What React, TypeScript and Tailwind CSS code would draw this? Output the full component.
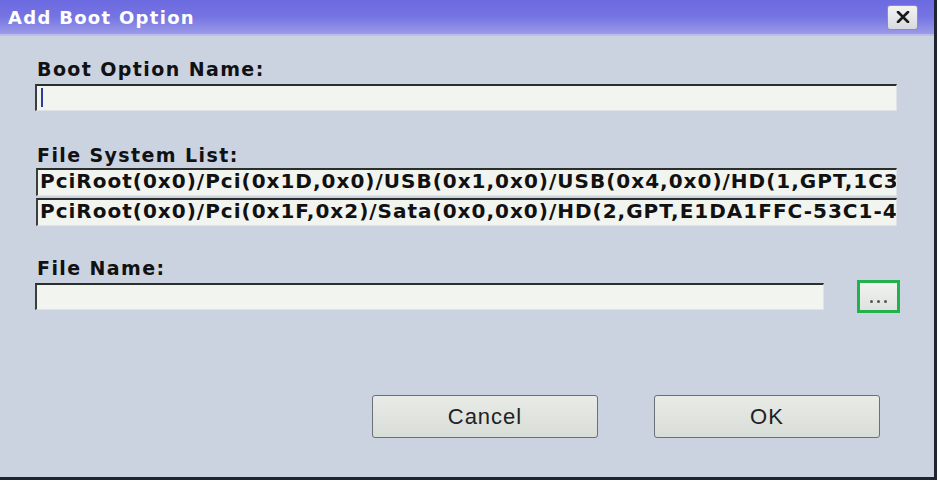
import React from "react";

const font = { fontFamily: '"DejaVu Sans", "Liberation Sans", sans-serif' };

function SunkenBox({ className = "", children }: { className?: string; children?: React.ReactNode }) {
  return (
    <div
      className={`border-t-2 border-l-2 border-t-[#2a2f2c] border-l-[#3a3f3c] border-b border-r border-b-[#dfe3e6] border-r-[#dfe3e6] bg-[#f1f4ef] ${className}`}
    >
      {children}
    </div>
  );
}

export default function App() {
  const rows = [
    "PciRoot(0x0)/Pci(0x1D,0x0)/USB(0x1,0x0)/USB(0x4,0x0)/HD(1,GPT,1C3",
    "PciRoot(0x0)/Pci(0x1F,0x2)/Sata(0x0,0x0)/HD(2,GPT,E1DA1FFC-53C1-4",
  ];
  return (
    <div className="w-[940px] h-[484px] bg-white overflow-hidden relative" style={font}>
      <div className="w-[937px] h-[480px] border-r-[3px] border-b-[3px] border-[#1e2430] bg-[#cbd3e0] flex flex-col">
        {/* title bar */}
        <div className="h-[36px] shrink-0 bg-gradient-to-b from-[#6c6ae0] via-[#7674e2] to-[#9c9ae8] border-b-2 border-[#b9bdea] flex items-center justify-between pl-[8px] pr-[16px]">
          <span className="text-white font-bold text-[18px] tracking-[1.3px]">Add Boot Option</span>
          <div className="w-[31px] h-[25px] rounded-[3px] border border-[#8d8fa8] bg-gradient-to-b from-[#f4f4f4] to-[#d8dadf] flex items-center justify-center">
            <svg width="14" height="12" viewBox="0 0 14 12">
              <path d="M2 1 L12 11 M12 1 L2 11" stroke="#1a1a1a" strokeWidth="2.6" strokeLinecap="round" />
            </svg>
          </div>
        </div>
        {/* body */}
        <div className="flex flex-col pl-[35px] pr-[37px] pt-[23px]">
          <div className="text-[19px] font-bold text-[#111] leading-[20px] tracking-[1.4px] pl-[2px]">Boot Option Name:</div>
          <SunkenBox className="mt-[5px] h-[27px] relative">
            <div className="absolute left-[4px] top-[2px] w-[2px] h-[19px] bg-[#2c3da0]" />
          </SunkenBox>

          <div className="mt-[34px] text-[19px] font-bold text-[#111] leading-[20px] tracking-[1.4px] pl-[2px]">File System List:</div>
          <div className="mt-[3px] flex flex-col gap-[2px] pl-[1px]">
            {rows.map((r) => (
              <SunkenBox key={r} className="h-[28px] overflow-hidden">
                <div className="whitespace-nowrap text-[20px] font-bold text-[#111] leading-[22px] tracking-[1px] pl-[2px]">{r}</div>
              </SunkenBox>
            ))}
          </div>

          <div className="mt-[32px] text-[19px] font-bold text-[#111] leading-[20px] tracking-[1.4px] pl-[2px]">File Name:</div>
          <div className="mt-[2px] flex items-center">
            <SunkenBox className="w-[789px] h-[27px] shrink-0" />
            <div className="ml-[33px] shrink-0 border-[3px] border-[#22b14c]">
              <div className="w-[37px] h-[27px] bg-gradient-to-b from-[#f2f3f1] to-[#dfe2df] flex items-end justify-center gap-[4px] pb-[7px]">
                <span className="w-[3px] h-[3px] rounded-full bg-[#555]" />
                <span className="w-[3px] h-[3px] rounded-full bg-[#555]" />
                <span className="w-[3px] h-[3px] rounded-full bg-[#555]" />
              </div>
            </div>
          </div>

          <div className="mt-[82px] flex pl-[337px] gap-[56px]">
            <button className="w-[226px] h-[43px] rounded-[3px] border border-[#6a6f78] bg-gradient-to-b from-[#e8ebe6] to-[#d9ddd8] text-[22px] tracking-[1px] text-[#222]" style={{ fontFamily: '"Liberation Sans", sans-serif' }}>
              Cancel
            </button>
            <button className="w-[226px] h-[43px] rounded-[3px] border border-[#6a6f78] bg-gradient-to-b from-[#e8ebe6] to-[#d9ddd8] text-[22px] tracking-[1px] text-[#222]" style={{ fontFamily: '"Liberation Sans", sans-serif' }}>
              OK
            </button>
          </div>
        </div>
      </div>
    </div>
  );
}
